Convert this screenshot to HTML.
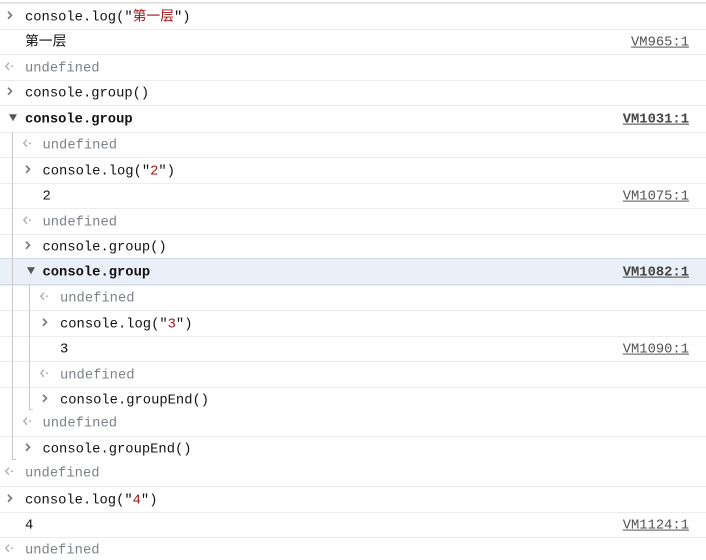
<!DOCTYPE html>
<html><head><meta charset="utf-8"><style>
html,body{margin:0;padding:0;background:#fff;width:706px;height:560px;overflow:hidden;position:relative}
.r{position:absolute;left:0;width:706px;font-family:"Liberation Mono","Noto Sans CJK SC",monospace;font-size:13.8px;color:#111;}
.b{border-top:1px solid #ececec}
.t{position:absolute;top:50%;transform:translateY(-40%);white-space:pre;line-height:16px}
.u{color:#7d8287}
.s{color:#a31515}
.bold{font-weight:bold;color:#111}
.lk{position:absolute;right:17px;top:50%;transform:translateY(-40%);color:#545454;text-decoration:underline;line-height:16px}
.ic{position:absolute;top:50%;transform:translateY(-45%)}
.hl{background:#eaf0f8;border-top:1px solid #cddcf1;border-bottom:1px solid #cddcf1}
.gl{position:absolute;width:1px;background:#c8c8c8}
</style></head><body>
<div style="position:absolute;left:0;top:0;width:706px;height:2px;border-bottom:1px solid #e0e0e0"></div>
<div id="c"></div>
<div class="gl" style="left:12px;top:132px;height:328px"></div>
<div class="gl" style="left:29px;top:285px;height:125px"></div>
<div style="position:absolute;left:29px;top:409px;width:4px;height:1px;background:#c8c8c8"></div>
<div style="position:absolute;left:12px;top:459px;width:4px;height:1px;background:#c8c8c8"></div>
<script>
var CH='<svg width="8" height="10" viewBox="0 0 8 10"><path d="M2 1.5 L5.5 5 L2 8.5" fill="none" stroke="#777" stroke-width="1.6"/></svg>';
var RT='<svg width="10" height="10" viewBox="0 0 10 10"><path d="M5 1.5 L1.8 5 L5 8.5" fill="none" stroke="#b0b0b0" stroke-width="1.4"/><circle cx="8" cy="5" r="1" fill="#b0b0b0"/></svg>';
var TR='<svg width="10" height="10" viewBox="0 0 10 10"><path d="M1 2 L9 2 L5 9 Z" fill="#555"/></svg>';
var rows=[
[3,29,0,'c','console.log("<span class=s>第一层</span>")',''],
[29,54,0,'','第一层','VM965:1'],
[54,80,0,'r','<span class=u>undefined</span>',''],
[80,105,0,'c','console.group()',''],
[105,132,0,'t','<span class=bold>console.group</span>','VM1031:1',1],
[132,157,1,'r','<span class=u>undefined</span>',''],
[157,183,1,'c','console.log("<span class=s>2</span>")',''],
[183,208,1,'','2','VM1075:1'],
[208,234,1,'r','<span class=u>undefined</span>',''],
[234,258,1,'c','console.group()',''],
[258,284,1,'t','<span class=bold>console.group</span>','VM1082:1',1,1],
[285,310,2,'r','<span class=u>undefined</span>',''],
[310,336,2,'c','console.log("<span class=s>3</span>")',''],
[336,361,2,'','3','VM1090:1'],
[361,387,2,'r','<span class=u>undefined</span>',''],
[387,411,2,'c','console.groupEnd()','',0,0],
[411,436,1,'r','<span class=u>undefined</span>','',0,0,1],
[436,461,1,'c','console.groupEnd()',''],
[461,486,0,'r','<span class=u>undefined</span>','',0,0,1],
[486,512,0,'c','console.log("<span class=s>4</span>")',''],
[512,537,0,'','4','VM1124:1'],
[537,562,0,'r','<span class=u>undefined</span>','']
];
var h='';
rows.forEach(function(r){
 var tx=25+r[2]*17.5, ix=tx-20;
 var cls='r'+(r[7]?' hl':(r[8]?'':' b'));
 var ic='';
 if(r[3]=='c')ic='<span class=ic style="left:'+(ix+1)+'px">'+CH+'</span>';
 if(r[3]=='r')ic='<span class=ic style="left:'+(ix-1)+'px">'+RT+'</span>';
 if(r[3]=='t')ic='<span class=ic style="left:'+(ix+3)+'px">'+TR+'</span>';
 var lk=r[5]?'<span class="lk'+(r[6]?' bold':'')+'" style="'+(r[6]?'color:#444':'')+'">'+r[5]+'</span>':'';
 h+='<div class="'+cls+'" style="top:'+r[0]+'px;height:'+(r[1]-r[0]-1)+'px">'+ic+'<span class=t style="left:'+tx+'px">'+r[4]+'</span>'+lk+'</div>';
});
document.getElementById('c').innerHTML=h;
</script>
</body></html>
